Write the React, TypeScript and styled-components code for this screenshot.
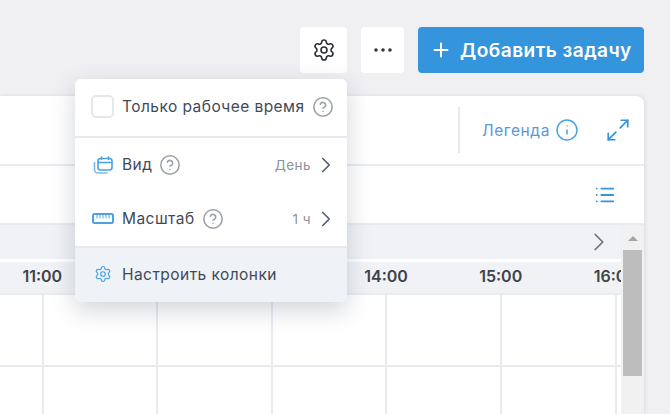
import React from 'react';
import styled, { createGlobalStyle } from 'styled-components';
import { ChevronRight, CircleHelp, Ellipsis, Info, List, Maximize2, Plus, Settings } from 'lucide-react';

const GlobalStyle = createGlobalStyle`
	html, body {
		margin: 0;
		padding: 0;
		background: #f0f0f3;
	}
	* {
		box-sizing: border-box;
	}
`;

const Page = styled.div`
	position: relative;
	width: 670px;
	height: 414px;
	overflow: hidden;
	background: #f0f0f3;
	font-family: Inter, 'Noto Sans', sans-serif;
`;

const Toolbar = styled.div`
	display: flex;
	justify-content: flex-end;
	gap: 14px;
	height: 96px;
	padding: 27px 26px 0 0;
`;

const IconButton = styled.button<{ $width: number }>`
	display: flex;
	align-items: center;
	justify-content: center;
	width: ${(p) => p.$width}px;
	height: 46px;
	padding: 0;
	border: 0;
	border-radius: 4px;
	background: #fff;
	color: #2b2f36;
`;

const AddButton = styled.button`
	display: flex;
	align-items: center;
	gap: 8px;
	width: 226px;
	height: 46px;
	padding: 0 0 0 12px;
	border: 0;
	border-radius: 4px;
	background: #3595dc;
	color: #fff;
	font-family: inherit;
	font-size: 19px;
	font-weight: 600;
	letter-spacing: 0.5px;
	white-space: nowrap;
`;

const Card = styled.div`
	width: 644px;
	height: 318px;
	overflow: hidden;
	border-radius: 0 8px 0 0;
	background: #fff;
	box-shadow: 1px 0 4px rgba(60, 70, 90, 0.12);
`;

const HeaderRow = styled.div`
	display: flex;
	align-items: center;
	justify-content: flex-end;
	height: 70px;
	padding-right: 13px;
	border-bottom: 2px solid #e8ebf1;
`;

const Separator = styled.div`
	width: 2px;
	height: 46px;
	margin-right: 22px;
	background: #e6e9ef;
`;

const LegendText = styled.span`
	margin-right: 5px;
	color: #5a97dc;
	font-size: 15.5px;
	letter-spacing: 0.6px;
`;

const ExpandSlot = styled.div`
	display: flex;
	margin-left: 26px;
	color: #3595dc;
`;

const InfoSlot = styled.div`
	display: flex;
	color: #4ea2e2;
`;

const FilterRow = styled.div`
	display: flex;
	align-items: center;
	justify-content: flex-end;
	height: 59px;
	padding-right: 28px;
	color: #3595dc;
	border-bottom: 2px solid #e8ebf1;
`;

const Body = styled.div`
	display: flex;
	height: 189px;
`;

const Timeline = styled.div`
	flex: 1;
	min-width: 0;
	overflow: hidden;
`;

const DayRow = styled.div`
	display: flex;
	align-items: center;
	justify-content: flex-end;
	height: 34px;
	padding-right: 7px;
	background: #f0f2f6;
	color: #68717e;
`;

const HoursRow = styled.div`
	display: flex;
	height: 33px;
	margin: 3px 0 0 -15px;
	background: #f0f2f6;
	border-bottom: 2px solid #e8ebf1;
`;

const Hour = styled.div`
	flex: 0 0 114.6px;
	padding-top: 4px;
	text-align: center;
	color: #3f4247;
	font-size: 16px;
	font-weight: 600;
	white-space: nowrap;
`;

const GridRow = styled.div<{ $height: number }>`
	display: flex;
	height: ${(p) => p.$height}px;
	margin-left: -71px;
	border-bottom: 2px solid #e9ebf0;
`;

const GridCell = styled.div`
	flex: 0 0 114.6px;
	border-right: 2px solid #e9ebf0;
`;

const Scrollbar = styled.div`
	display: flex;
	flex-direction: column;
	align-items: center;
	flex: 0 0 23px;
	padding-top: 11px;
	background: #f1f1f1;
`;

const ScrollArrow = styled.div`
	width: 0;
	height: 0;
	border-left: 5px solid transparent;
	border-right: 5px solid transparent;
	border-bottom: 5px solid #a3a3a3;
`;

const ScrollThumb = styled.div`
	width: 19px;
	height: 126px;
	margin-top: 9px;
	background: #bdbdbd;
`;

const Menu = styled.div`
	position: absolute;
	left: 75px;
	top: 79px;
	width: 272px;
	overflow: hidden;
	border-radius: 6px;
	background: #fff;
	box-shadow: 0 8px 24px rgba(50, 60, 80, 0.22);
	color: #3f4a58;
	font-size: 15.5px;
	letter-spacing: 0.45px;
`;

const MenuSection = styled.div<{ $height: number; $tint?: boolean }>`
	height: ${(p) => p.$height}px;
	background: ${(p) => (p.$tint ? '#eff2f7' : '#fff')};
	border-bottom: ${(p) => (p.$tint ? '0' : '2px solid #e6e9ef')};
`;

const MenuRow = styled.div<{ $height: number }>`
	display: flex;
	align-items: center;
	height: ${(p) => p.$height}px;
	padding: 0 16px;
	white-space: nowrap;
`;

const Checkbox = styled.div`
	flex: none;
	width: 23px;
	height: 23px;
	margin-right: 8px;
	border: 2px solid #e4e7ee;
	border-radius: 5px;
	background: #fff;
`;

const IconSlot = styled.div`
	display: flex;
	flex: none;
	justify-content: center;
	width: 24px;
	margin-right: 7px;
	color: #4ea2e2;
`;

const HelpSlot = styled.div`
	display: flex;
	flex: none;
	margin-left: 7px;
	color: #9aa1aa;
`;

const MenuValue = styled.span`
	margin-left: auto;
	margin-right: 2px;
	color: #8c929b;
	font-size: 13.5px;
`;

const ChevronSlot = styled.div`
	display: flex;
	margin-right: -8px;
	color: #56606d;
`;

const hours = ['11:00', '12:00', '13:00', '14:00', '15:00', '16:00'];
const cells = [0, 1, 2, 3, 4, 5];

const CalendarIcon = () => (
	<svg width="20" height="18" viewBox="0 0 20 18" fill="none" stroke="currentColor" strokeWidth="1.6" strokeLinecap="round">
		<rect x="5" y="2.5" width="14" height="11.5" rx="2.5" />
		<path d="M5 6.5h14M8.5 1v2.5M15.5 1v2.5" />
		<path d="M1.5 6.5v7a3.5 3.5 0 0 0 3.5 3.5h9" opacity="0.75" />
	</svg>
);

const RulerIcon = () => (
	<svg width="22" height="11" viewBox="0 0 22 11" fill="none" stroke="currentColor" strokeLinecap="round">
		<rect x="1" y="1" width="20" height="9" rx="1.5" strokeWidth="2" />
		<path d="M5 2v3M8 2v3M11 2v3M14 2v3M17 2v3" strokeWidth="1" />
	</svg>
);

const App = () => (
	<Page>
		<GlobalStyle />
		<Toolbar>
			<IconButton $width={47}>
				<Settings size={24} strokeWidth={1.6} />
			</IconButton>
			<IconButton $width={43}>
				<Ellipsis size={24} strokeWidth={1.5} />
			</IconButton>
			<AddButton>
				<Plus size={22} strokeWidth={2.2} />
				Добавить задачу
			</AddButton>
		</Toolbar>
		<Card>
			<HeaderRow>
				<Separator />
				<LegendText>Легенда</LegendText>
				<InfoSlot>
					<Info size={24} strokeWidth={1.5} />
				</InfoSlot>
				<ExpandSlot>
					<Maximize2 size={26} strokeWidth={1.6} />
				</ExpandSlot>
			</HeaderRow>
			<FilterRow>
				<List size={22} strokeWidth={2} />
			</FilterRow>
			<Body>
				<Timeline>
					<DayRow>
						<ChevronRight size={30} strokeWidth={1.4} />
					</DayRow>
					<HoursRow>
						{hours.map((hour) => (
							<Hour key={hour}>{hour}</Hour>
						))}
					</HoursRow>
					<GridRow $height={72}>
						{cells.map((cell) => (
							<GridCell key={cell} />
						))}
					</GridRow>
					<GridRow $height={60}>
						{cells.map((cell) => (
							<GridCell key={cell} />
						))}
					</GridRow>
				</Timeline>
				<Scrollbar>
					<ScrollArrow />
					<ScrollThumb />
				</Scrollbar>
			</Body>
		</Card>
		<Menu>
			<MenuSection $height={59}>
				<MenuRow $height={55}>
					<Checkbox />
					Только рабочее время
					<HelpSlot>
						<CircleHelp size={22} strokeWidth={1.7} />
					</HelpSlot>
				</MenuRow>
			</MenuSection>
			<MenuSection $height={110}>
				<MenuRow $height={53}>
					<IconSlot>
						<CalendarIcon />
					</IconSlot>
					Вид
					<HelpSlot>
						<CircleHelp size={22} strokeWidth={1.7} />
					</HelpSlot>
					<MenuValue>День</MenuValue>
					<ChevronSlot>
						<ChevronRight size={26} strokeWidth={1.6} />
					</ChevronSlot>
				</MenuRow>
				<MenuRow $height={55}>
					<IconSlot>
						<RulerIcon />
					</IconSlot>
					Масштаб
					<HelpSlot>
						<CircleHelp size={22} strokeWidth={1.7} />
					</HelpSlot>
					<MenuValue>1 ч</MenuValue>
					<ChevronSlot>
						<ChevronRight size={26} strokeWidth={1.6} />
					</ChevronSlot>
				</MenuRow>
			</MenuSection>
			<MenuSection $height={54} $tint>
				<MenuRow $height={52}>
					<IconSlot>
						<Settings size={18} strokeWidth={1.6} />
					</IconSlot>
					Настроить колонки
				</MenuRow>
			</MenuSection>
		</Menu>
	</Page>
);

export default App;
